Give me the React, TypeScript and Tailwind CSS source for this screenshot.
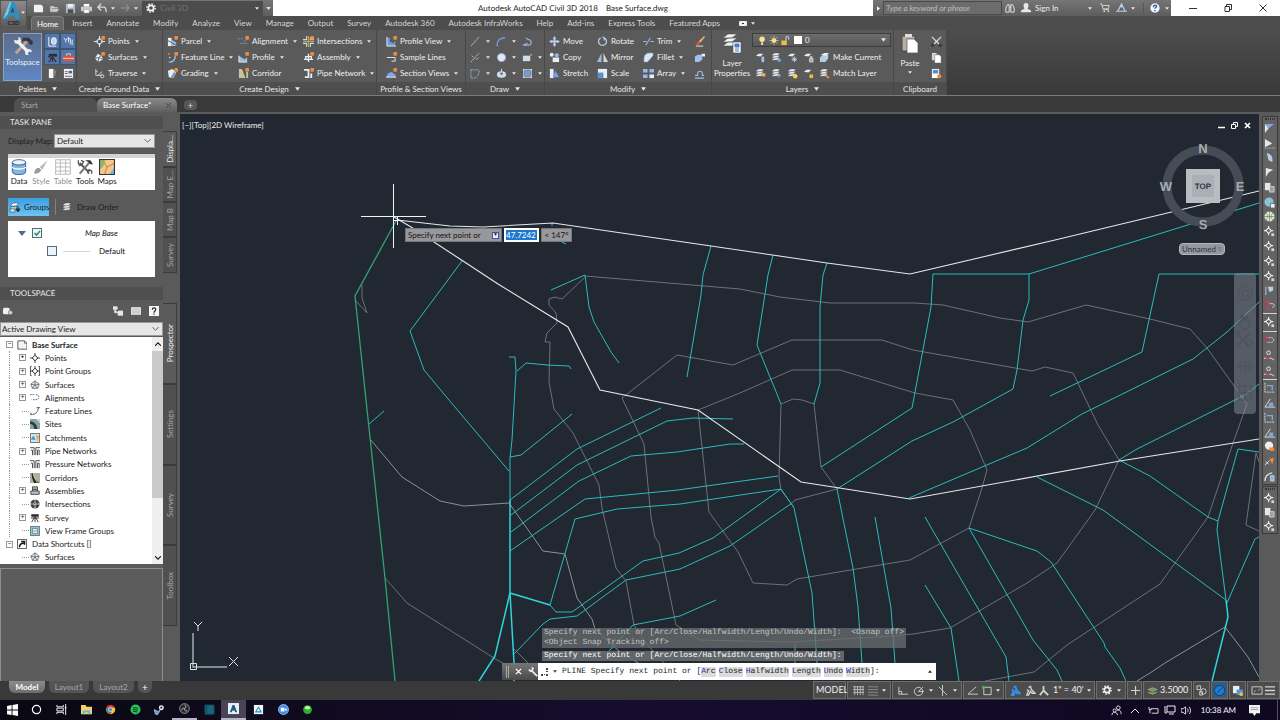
import { ReactNode, useState } from 'react';
import { clsx } from 'clsx';

// ── icons ────────────────────────────────────────────────────────────────────
const BLUE = '#9dbbe0';
const PALE = '#e8eef5';
const ORANGE = '#f08a3c';

const dot = <rect x="8" y="0" width="4" height="4" rx="1" fill={ORANGE} />;
const stack = (
  <g fill={PALE} stroke="#3a3a3a" strokeWidth=".5">
    <path d="M1 8l3-2h6l-3 3H1z" />
    <path d="M1 5.5l3-2h6l-3 3H1z" />
    <path d="M1 3l3-2h6l-3 3H1z" />
  </g>
);
const target = (c: string) => (
  <g fill="none" stroke={c} strokeWidth="1.1">
    <path d="M6 2.5L9.5 6 6 9.5 2.500 6z" />
    <path d="M6 0v4M6 8v4M0 6h4M8 6h4" />
  </g>
);

const ICONS: Record<string, ReactNode> = {
  points: <>{target('#dfe6ee')}{dot}</>,
  surfaces: <><path d="M1 7l3-5 4 2 2 4-5 3z" fill={PALE} /><path d="M1 7l4-1 3-2M5 6v5M5 6l5 2" stroke="#566" fill="none" />{dot}</>,
  traverse: <g fill="none" stroke="#d0d6dc"><path d="M2 1v7h7M4 8l5-4M2 4h2" /><circle cx="9" cy="9" r="1.8" /></g>,
  parcel: <><path d="M1 2h4v9H1z" fill={PALE} /><path d="M5 4l5 3v4H5z" fill={BLUE} /><path d="M1 5l9 5" stroke="#556" />{dot}</>,
  featureLine: <><path d="M2 11c5 0 7-3 7-7" stroke={BLUE} strokeWidth="1.5" fill="none" /><circle cx="2" cy="2" r="1" fill={ORANGE} /><circle cx="3" cy="6" r=".8" fill={PALE} />{dot}</>,
  grading: <><path d="M1 3l5-2 4 4-3 6-5-1z" fill={PALE} /><path d="M4 10l4-6 2 2-3 5z" fill="#7f97b5" />{dot}</>,
  alignment: <><path d="M0 3h5M2 8h8M6 6l4-2" stroke="#6e9bd8" strokeDasharray="2 1" fill="none" />{dot}</>,
  profile: <><path d="M1 4v7h9V6L7 8 4 6z" fill={BLUE} /><path d="M1 4v7h9" stroke={PALE} fill="none" />{dot}</>,
  corridor: <><path d="M1 1h3l4 10H1zM9 4h2v7H9z" fill="#b9c5b9" /><path d="M4 2l3 9" stroke="#e2c44c" strokeWidth="1.4" />{dot}</>,
  intersections: <><path d="M4 0v4H0M8 12V8h4M4 12V8H0M8 1v3h4" stroke="#d8dde2" strokeWidth="1.2" fill="none" /><path d="M6 0v12M0 6h12" stroke="#e0bf45" strokeWidth=".8" />{dot}</>,
  assembly: <><path d="M1 8h10M3 8V5h6v3M6 2v9" stroke={PALE} strokeWidth="1.5" fill="none" />{dot}</>,
  pipe: <><path d="M1 2h5v8H2M9 6v5" stroke={PALE} strokeWidth="2" fill="none" />{dot}</>,
  profileView: <><path d="M1 2v9h9V5L8 8 4 6V2z" fill="#6f9be0" /><path d="M1 1v10h10" stroke={PALE} fill="none" />{dot}</>,
  sampleLines: <><path d="M1 6h9v4H6" stroke={PALE} fill="none" />{dot}</>,
  sectionViews: <><path d="M0 10l2-4 4-2 4 3 1 3z" fill="#7aa7ea" /><path d="M0 10h11" stroke={PALE} />{dot}</>,
  line: <path d="M1 11L10 1" stroke={BLUE} fill="none" />,
  arc: <path d="M1 11c0-6 3-9 9-9M1 11l1-1" stroke="#7aa7ea" fill="none" strokeWidth="1.3" />,
  pline: <path d="M1 10h6a3 3 0 000-6L4 2M1 10l5-2" stroke="#9db7dd" fill="none" strokeWidth="1.2" />,
  xline: <path d="M1 11L10 1M2 4l3 3M7 8l3-2" stroke="#c7cfd8" fill="none" strokeDasharray="2 1" />,
  circle: <circle cx="6" cy="6" r="4.5" fill="#dfe8f4" stroke="#8fa9c9" />,
  rect: <><path d="M1 4h8v6H1z" fill="#cfdceb" /><path d="M9 2h2v2H9z" fill={ORANGE} /></>,
  spline: <path d="M1 2v9h3c4 0 6-4 6-8M1 2h9" stroke={BLUE} fill="none" strokeDasharray="2 1" />,
  ellipse: <><ellipse cx="6" cy="7" rx="5" ry="3.5" fill="#cfdceb" /><circle cx="6" cy="6" r="1.5" fill="#5b6d88" /><path d="M6 1v4" stroke={PALE} /></>,
  hatch: <><path d="M1 2h10M1 10h10M2 1v10M10 1v10" stroke={PALE} /><path d="M3 3h6v6H3z" fill="#6f9be0" /></>,
  move: <path d="M6 0l2 3H7v2h2V4l3 2-3 2V7H7v2h1l-2 3-2-3h1V7H3v1L0 6l3-2v1h2V3H4z" fill="#b9cdea" />,
  copy: <g fill={PALE}><circle cx="3" cy="3" r="2.2" /><circle cx="8.5" cy="3.5" r="2.2" fill={BLUE} /><path d="M4 6h7v5H4z" /></g>,
  stretch: <><path d="M1 1h4v10H1z" fill={PALE} /><path d="M4 10l3-7 4 7z" fill="#6fa3e8" /></>,
  rotate: <path d="M4 2a4.4 4.4 0 104 0M8 2l-2-1M8 2v3" stroke="#b4c9e6" strokeWidth="1.4" fill="none" />,
  mirror: <><path d="M5 1v10H0z" fill={BLUE} /><path d="M7 1v10h5z" fill="#d0d7e0" /></>,
  scale: <><path d="M1 1h10v10H1z" fill={PALE} /><path d="M1 5h6v6H1z" fill="#5f8bd0" /></>,
  trim: <path d="M0 6h4M8 6h4M3 10L8 2" stroke="#9db7dd" fill="none" strokeWidth="1.2" />,
  fillet: <path d="M1 11V7c0-4 3-6 6-6h4v3L5 11z" fill="#dce6f2" stroke="#6f8fc4" strokeWidth=".7" />,
  array: <g fill="#8fb7ef"><path d="M0 1h5v4H0zM7 1h5v4H7zM0 7h5v4H0z" /><path d="M7 7h5v4H7z" fill={PALE} /></g>,
  brush: <><path d="M5 6l6-6 1 1-5 6z" fill="#e2bb62" /><path d="M1 9l4-3 2 1-2 3z" fill="#e0532c" /><path d="M2 11h8" stroke={PALE} /></>,
  explode: <><path d="M1 5l3-2h5v5l-3 3H1z" fill="#9fc0ee" /><path d="M8 2h4v3H9z" fill={PALE} /></>,
  offset: <path d="M1 11h10M1 8h3V6a2.5 2.5 0 115 0v2h2" stroke={BLUE} fill="none" strokeWidth="1.2" />,
  layerA: <><path d="M1 4l3-2h5l-3 3z" fill={PALE} /><path d="M7 5h3v6H7z" fill="#9fc0ee" /></>,
  layerB: <>{stack}<circle cx="9" cy="9" r="2" fill="#6fa3e8" /></>,
  layerC: <><path d="M1 4l3-2h5l-3 3z" fill={PALE} /><path d="M8 5v6M5 8h6M6 6l4 4M10 6L6 10" stroke="#b9d7f8" /></>,
  layerD: <><path d="M1 4l3-2h5l-3 3z" fill={PALE} /><path d="M7 7h4v4H7zM8 7V5h2v2" fill="#aab" stroke={PALE} strokeWidth=".6" /></>,
  layerE: <><path d="M1 6l3-3h6v4l-3 4H1z" fill="#b8cbe4" /><path d="M2 3l4-2h5L8 4z" fill={PALE} /></>,
  layerF: <>{stack}<circle cx="9.5" cy="7.5" r="2" fill="#f5b04a" /></>,
  layerG: <>{stack}<path d="M8 6l3 2-3 3z" fill="#7db1f7" /></>,
  layerH: <>{stack}<circle cx="9" cy="9" r="2.4" fill="#f1d84b" /></>,
  layerI: <><path d="M1 4l3-2h5l-3 3z" fill={PALE} /><path d="M7 7h4v4H7z" fill="#e8b93c" /></>,
  layerJ: <>{stack}<path d="M7 8l4 3" stroke={ORANGE} strokeWidth="2" /></>,
  cut: <><path d="M1 1l8 8M11 1L3 9" stroke="#dfe3e8" strokeWidth="1.2" /><circle cx="2" cy="10" r="1.3" fill="none" stroke="#222" /><circle cx="10" cy="10" r="1.3" fill="none" stroke="#222" /></>,
  pages: <><path d="M1 1h5v8H1z" fill="#d5d8db" /><path d="M4 3h5l2 2v7H4z" fill="#fff" stroke="#666" strokeWidth=".5" /></>,
  pasteSpec: <><path d="M1 1h8v10H1z" fill="#fff" /><path d="M2 2h6v4H2z" fill="#5f8bd0" /><circle cx="9" cy="9" r="2.3" fill={ORANGE} /></>,
  // quick access
  newFile: <path d="M1 2h8l2 2v6H1z" fill="#f2f2f2" />,
  open: <path d="M1 3h4l1 1h4v2h2l-3 4H1zM3 6h8" fill="#c9c9c9" stroke="#555" strokeWidth=".5" />,
  save: <><path d="M1 1h10v10H1z" fill="#aeb6c0" /><path d="M3 1h6v4H3z" fill="#eee" /><path d="M3 7h6v4H3z" fill="#46505c" /></>,
  print: <><path d="M3 1h6v3H3z" fill="#fff" /><path d="M0 4h12v5H0z" fill="#c8ccd0" /><path d="M3 7h6v4H3z" fill="#fff" stroke="#777" strokeWidth=".5" /></>,
  undo: <path d="M5 1L1 5l4 4M1 5h7c3 0 3 3 3 6" stroke="#d8d8d8" strokeWidth="1.6" fill="none" />,
  redo: <path d="M7 2l4 4-4 4M11 6H1" stroke="#8a8a8a" strokeWidth="1.6" fill="none" />,
  gear: <g fill="none" stroke="#f2f2f2"><circle cx="6" cy="6" r="3.2" strokeWidth="2" /><circle cx="6" cy="6" r="5" strokeWidth="1.6" strokeDasharray="2 1.9" /></g>,
  binoculars: <path d="M1 11V6l2-4h2v9zM7 11V2h2l2 4v5zM5 5h2" fill="none" stroke="#e2e2e2" strokeWidth="1.2" />,
  user: <path d="M6 0a3 3 0 013 3c0 2-1 3-1 4l4 2v2H0V9l4-2c0-1-1-2-1-4a3 3 0 013-3z" fill="#e4e6e9" />,
  cart: <><path d="M0 1h2l2 7h7M3 3h8l-1 4H4" stroke="#e2e2e2" fill="none" /><circle cx="5" cy="10" r="1" fill="#eee" /><circle cx="10" cy="10" r="1" fill="#eee" /></>,
  exchange: <path d="M6 1L2 9h8zM0 9h12M6 1v4" stroke="#b7d2f0" strokeWidth="1.3" fill="none" />,
  help: <><circle cx="6" cy="6" r="5.6" fill="#f2f5fa" /><path d="M4 5c0-3 4-3 4-1 0 1-2 1-2 3M6 8.300v1.500" stroke="#2257a5" strokeWidth="1.500" fill="none" /></>,
  // palette toggles
  palA: <><path d="M2 1v10h8" stroke="#fff" fill="none" /><rect x="5" y="2" width="5" height="7" rx="2" fill="#bcd5f5" stroke="#fff" /></>,
  palB: <path d="M1 2l2 3 2-3M3 5v2M6 1v6M6 3h2v6M10 4v6" stroke="#e8f0fa" fill="none" />,
  palC: <><path d="M2 2h9v3H2z" fill="#29303a" /><path d="M6 5l-4 6M6 5l4 6M6 5v6M1 5l3 1" stroke="#29303a" fill="none" strokeWidth="1.2" /></>,
  palD: <><rect x="0" y="4" width="12" height="6" rx="1" fill="#d9553d" /><path d="M4 4V2h4v2M0 7h12" stroke="#f4d1c6" fill="none" /></>,
  palE: <><path d="M2 1h5v10H2z" fill="#f4f4f4" /><path d="M8 1l2 3-2 7z" fill="#8a8a8a" /></>,
  palF: <><path d="M1 1h10v10H1z" fill="#f2f2f2" /><path d="M6 3h4v3H6z" fill="#3f6fb5" /><path d="M2 4h3M2 6h3M2 9h8" stroke="#555" /></>,
  // task pane
  data: <><path d="M1 2.500v7c0 3 10 3 10 0v-7z" fill="#86b4dc" stroke="#2c5e93" strokeWidth=".7" /><ellipse cx="6" cy="2.500" rx="5" ry="2" fill="#eaf4fc" stroke="#2c5e93" strokeWidth=".7" /><path d="M1 6c1 2 9 2 10 0" fill="none" stroke="#fff" /></>,
  style: <><path d="M5 6l6-5-4 7z" fill="#bbb" /><path d="M1 11c0-3 2-5 4-4l1 1c0 2-3 3-5 3z" fill="#999" /></>,
  table: <g fill="none" stroke="#bdbdbd" strokeWidth=".8"><path d="M.500.500h11v11H.500z" /><path d="M.500 3h11M.500 6h11M.500 9h11M4 1v10M8 1v10" /></g>,
  tools: <><path d="M2 3l7 7" stroke="#555" strokeWidth="1.500" /><path d="M1 1v2l1 2 2-1 1-2-2-1M11 11V9L9 8 8 10l1 1" stroke="#555" fill="none" /><path d="M9 3l-7 8" stroke="#777" strokeWidth="1.500" /><path d="M6 1h4l2 3-2 0-2-2z" fill="#333" /></>,
  maps: <><path d="M0 0h12v12H0z" fill="#f3c98a" /><path d="M0 0h5L3 6 0 8z" fill="#7fbd6a" /><path d="M7 12l5-6v6z" fill="#6fb4dd" /><path d="M2 0l4 6-2 6M6 6l6-3" stroke="#d98a58" fill="none" /><path d="M.400.400h11.200v11.200H.400z" stroke="#333" strokeWidth=".800" fill="none" /></>,
  groups: <><path d="M1 5l3-3h6L7 5zM1 8l1-2h6L7 8z" fill="#fff" stroke="#345" strokeWidth=".6" /><path d="M9 5v5M7 8l2 3 2-3z" fill="#1d3245" stroke="#1d3245" /><path d="M1 8h5v3H1z" fill="#dce9f5" stroke="#345" strokeWidth=".6" /></>,
  order: stack,
  globe: <><rect x="0" y="2" width="8" height="8" rx="2" fill="#f1f1f1" /><circle cx="9" cy="8" r="2.600" fill="#c9d3dc" stroke="#555" strokeWidth=".7" /></>,
  treeToggle: <path d="M0 1h5v3H0zM2 4v4h4M6 6h6v5H6z" fill="#e6e6e6" stroke="#e6e6e6" />,
  preview: <path d="M0 2h12v8H0z" fill="#cfcfcf" stroke="#efefef" />,
  helpBox: <><path d="M0 0h12v12H0z" fill="#f6f6f6" /><path d="M4 4.500C4 1 8.500 2 8 4.500 8 6 6 6 6 8M6 9v1.500" stroke="#222" strokeWidth="1.400" fill="none" /></>,
  // prospector tree
  tDrawing: <><path d="M1 1h8l3 3v7H1z" fill="#f4f4f4" stroke="#444" /><path d="M9 1v3h3" fill="none" stroke="#444" strokeWidth=".7" /></>,
  tPoints: target('#333'),
  tPointGroups: <>{target('#333')}<path d="M2 .500H.500v11H2M10 .500h1.500v11H10" stroke="#333" fill="none" /></>,
  tSurfaces: <path d="M1 5l5-4 5 4-2 5H3zM1 5l5 1 5-1M6 1v5l-3 4M6 6l3 4" fill="#e9ecef" stroke="#444" strokeWidth=".8" />,
  tAlignments: <path d="M0 2h5M7 2c5 0 5 6 0 6H2" fill="none" stroke="#555" strokeDasharray="2 1" />,
  tFeature: <><path d="M1 10c5 1 9-3 9-8" fill="none" stroke="#444" /><path d="M8 2h4M1 8v3" stroke="#444" /></>,
  tSites: <><path d="M0 0h12v12H0z" fill="#88a2a8" /><path d="M0 3c5 0 8 3 9 9H5C5 8 3 6 0 6z" fill="#2e3b36" /><path d="M7 0h5v5z" fill="#b9dcef" /></>,
  tCatch: <><path d="M.500.500h11v11H.500z" fill="#cfe6ef" stroke="#555" /><path d="M1 8l3-5 3 5z" fill="#4e94c9" /><path d="M7 2l4 2-2 7z" fill="#f1a65c" /></>,
  tPipe: <path d="M0 2h5v9M3 5v6M1 5h2M7 11V2h5M9 11V5h2v6" fill="none" stroke="#333" />,
  tCorridor: <><path d="M0 0h12v12H0z" fill="#a9b0a6" /><path d="M3 0c1 5 3 8 8 12H5C3 8 2 5 2 0z" fill="#222" /><path d="M4 1c1 5 3 8 5 11" stroke="#e6cf4a" fill="none" /></>,
  tAssembly: <path d="M3 4V1h6v3M1 10V6h10v4zM3 6V4h6v2" fill="#b9bfc6" stroke="#333" />,
  tInter: <><circle cx="6" cy="6" r="5.500" fill="#444" /><path d="M6 0v12M0 6h12" stroke="#fff" strokeWidth="1.200" strokeDasharray="2 1" /></>,
  tSurvey: <path d="M2 2h8v2H2zM6 4L2 11M6 4l4 7M6 4v7M1 6h10" fill="#333" stroke="#333" strokeWidth="1.100" />,
  tView: <><path d="M.500.500h11v11H.500z" fill="#9ec3cd" stroke="#46666e" /><path d="M3 3h6v6H3zM4 6h4" fill="#e1eff2" stroke="#46666e" strokeWidth=".7" /></>,
  tShortcut: <><path d="M.500.500h11v11H.500z" fill="#fff" stroke="#333" /><path d="M3 10c0-4 2-5 5-5M5 3h4v4" stroke="#111" strokeWidth="1.800" fill="none" /></>,
  // right toolbar
  rA: <><path d="M1 1h10L5 6z" fill="#7fa8dc" /><path d="M1 1v10l4-5z" fill="#dfe6ee" /></>,
  rB: <><path d="M1 1l8 5-8 4z" fill="#dfe6ee" /><path d="M1 11h11" stroke="#cfd6de" strokeDasharray="1 1" /></>,
  rC: <path d="M3 1c5 1 7 5 6 10L5 9z" fill="#b8cde8" />,
  rD: <path d="M2 11V1l8 2-5 3z" fill="#e2e7ee" />,
  rE: <><path d="M1 1h6v8H1z" fill="#e4e7ea" /><path d="M6 5h5v6H6z" fill="#9a9fa6" stroke="#eee" strokeWidth=".7" /></>,
  rF: <><circle cx="5.500" cy="5.500" r="5" fill="#8cc3d2" /><path d="M7 7h5v5H7z" fill="#e6eef2" stroke="#445" strokeWidth=".7" /></>,
  rG: <><circle cx="6" cy="6" r="5.500" fill="#e3ead0" /><path d="M6 0v12M0 6h12M2 2c3 3 3 5 0 8M10 2c-3 3-3 5 0 8" stroke="#6a8466" strokeWidth=".8" fill="none" /></>,
  rH: <><path d="M5 2l3 3-3 3-3-3zM5 0v2M5 8v2M0 5h2M8 5h2" stroke="#f0f0f0" fill="none" strokeWidth="1.200" /><path d="M8 8h3v3H8z" fill="#cfd6de" /></>,
  rI: <><path d="M2 11V2" stroke="#b8cde8" /><path d="M4 2h6v4L6 8z" fill="#b8cde8" /></>,
  rJ: <><path d="M4 1v10M1 2l6 0" stroke="#e0384f" strokeWidth="1.500" /><path d="M6 4h3c3 0 3 4 0 4" stroke="#c9d6e6" fill="none" /></>,
  rK: <><circle cx="3" cy="4" r="1.800" fill="#e0384f" /><path d="M5 4h3c4 0 3 5 0 5H3" stroke="#d6dde6" strokeDasharray="2 1" fill="none" /></>,
  rL: <><circle cx="5" cy="3" r="2" fill="none" stroke="#eee" /><circle cx="4" cy="9" r="1.600" fill="#e0384f" /><path d="M0 9h2M6 9h2l3 2" stroke="#eee" fill="none" /></>,
  rM: <><path d="M1 1v10h11" stroke="#dfe6ee" fill="none" strokeDasharray="2 1" /><path d="M3 4h6v5" stroke="#7fa8dc" fill="none" strokeWidth="1.500" /></>,
  rN: <><path d="M1 11h11M1 11l6-9" stroke="#dfe6ee" fill="none" /><path d="M6 6h4v4H5z" fill="#7fa8dc" /></>,
  rO: <><circle cx="5.500" cy="5" r="4.500" fill="#f0f0f0" /><path d="M5 7h6v4H7z" fill={ORANGE} /></>,
  rP: <><path d="M1 10l5-5M2 6l3 3" stroke="#dfe6ee" /><path d="M6 3l5-1-2 7z" fill={ORANGE} /></>,
  rQ: <><path d="M1 11c0-6 3-8 8-9" stroke="#dfe6ee" strokeWidth="1.300" fill="none" /><path d="M7 5h4v6H7z" fill="#8fb2e6" stroke="#eee" strokeWidth=".6" /></>,
};

function Ico({ n, className = 'size-3' }: { n: string; className?: string }) {
  return (
    <svg viewBox="0 0 12 12" className={clsx('shrink-0', className)} fill="none" aria-hidden="true">
      {ICONS[n]}
    </svg>
  );
}

function Caret({ className = '' }: { className?: string }) {
  return (
    <svg viewBox="0 0 6 4" className={clsx('w-1 h-[3px] shrink-0 fill-[#e6e6e6]', className)} aria-hidden="true">
      <path d="M0 0h6L3 4z" />
    </svg>
  );
}

function Chevron() {
  return (
    <svg viewBox="0 0 8 5" className="pointer-events-none absolute right-1 top-[5px] h-1 w-[7px]" fill="none" stroke="#444" aria-hidden="true">
      <path d="M0 0l4 4 4-4" />
    </svg>
  );
}

// ── title bar ────────────────────────────────────────────────────────────────
function QuickAccess() {
  return (
    <div className="flex h-4 w-[246px] shrink-0 items-center bg-linear-to-b from-[#757575] to-[#5d5d5d] pl-1.5">
      <div className="flex items-center gap-[5px]">
        {['newFile', 'open', 'save', 'print'].map((n) => (
          <button key={n} aria-label={n}><Ico n={n} className="size-[11px]" /></button>
        ))}
        <button aria-label="Undo" className="flex items-center gap-1"><Ico n="undo" className="size-[10px]" /><Caret /></button>
        <button aria-label="Redo" className="flex items-center gap-1"><Ico n="redo" className="size-[10px]" /><Caret /></button>
      </div>
      <button className="ml-1 flex h-[15px] flex-1 items-center gap-1 bg-[#4c4c4c] px-1 text-[#737373]">
        <Ico n="gear" className="size-[10px]" />
        <span>Civil 3D</span>
        <Caret className="ml-auto" />
      </button>
      <button aria-label="Customize" className="flex w-[10px] justify-center"><Caret className="w-[5px] h-1" /></button>
    </div>
  );
}

function InfoCenter() {
  return (
    <div className="flex h-4 w-[298px] shrink-0 items-center bg-linear-to-b from-[#757575] to-[#5d5d5d]">
      <button aria-label="Collapse search" className="flex w-[10px] justify-center">
        <svg viewBox="0 0 4 6" className="h-[5px] w-[3px] fill-white"><path d="M0 0l4 3-4 3z" /></svg>
      </button>
      <input
        aria-label="Search"
        placeholder="Type a keyword or phrase"
        className="h-[14px] w-[119px] border border-[#4a4a4a] bg-[#6c6c6c] px-0.5 italic text-white outline-none placeholder:text-[#bdbdbd]"
      />
      <button aria-label="Find" className="ml-[3px]"><Ico n="binoculars" className="size-[10px]" /></button>
      <button className="ml-[6px] flex items-center gap-[4px] text-[#ededed]">
        <Ico n="user" className="size-[10px]" />Sign In
      </button>
      <Caret className="ml-auto mr-2" />
      <button aria-label="App store"><Ico n="cart" className="size-[10px]" /></button>
      <button aria-label="Stay connected" className="ml-1.5 flex items-center gap-1"><Ico n="exchange" className="size-[11px]" /><Caret /></button>
      <button aria-label="Help" className="ml-2 mr-0.5 flex items-center gap-[5px] border-l border-[#555] pl-1.5"><Ico n="help" className="size-[10px]" /><Caret /></button>
    </div>
  );
}

const TABS = [
  'Home', 'Insert', 'Annotate', 'Modify', 'Analyze', 'View', 'Manage', 'Output', 'Survey',
  'Autodesk 360', 'Autodesk InfraWorks', 'Help', 'Add-ins', 'Express Tools', 'Featured Apps',
];

function TopBars() {
  return (
    <header className="flex shrink-0">
      <button aria-label="Application menu" className="flex h-[28px] w-[27px] shrink-0 flex-col items-center border border-[#555] bg-linear-to-b from-[#8b8b8b] to-[#5b5b5b]">
        <svg viewBox="0 0 24 20" className="h-[19px] w-[23px]" aria-hidden="true">
          <path d="M1 19L8 1h5l6 18h-5l-1-4H8l-2 4z" fill="#2d8fc4" />
          <path d="M8 1h2L6 14l-5 5z" fill="#7cc6ea" />
          <path d="M9 12l2-6 2 6z" fill="#4a4a4a" />
          <path d="M20 11h4l-2 2.500z" fill="#eee" />
        </svg>
        <span className="text-[6px] font-bold leading-none text-[#222]">C3D</span>
      </button>
      <div className="min-w-0 flex-1">
        <div className="flex h-4 items-center bg-white">
          <QuickAccess />
          <h1 className="min-w-0 flex-1 truncate whitespace-pre text-center text-[#222]">Autodesk AutoCAD Civil 3D 2018    Base Surface.dwg</h1>
          <InfoCenter />
          <div className="flex w-[109px] shrink-0 items-center justify-around pl-1">
            <button aria-label="Minimize"><svg viewBox="0 0 8 8" className="size-2" stroke="#333"><path d="M0 4.500h8" /></svg></button>
            <button aria-label="Restore"><svg viewBox="0 0 8 8" className="size-2" stroke="#333" fill="none"><path d="M1 2.500h4.500v5H1zM2.500 2V.500h5v5H6" /></svg></button>
            <button aria-label="Close"><svg viewBox="0 0 8 8" className="size-2" stroke="#333"><path d="M.500.500l7 7M7.500.500l-7 7" /></svg></button>
          </div>
        </div>
        <nav className="flex h-[14px] items-stretch bg-[#4d4d4d] pl-1 text-[#d6d6d6]">
          {TABS.map((t, i) => (
            <button key={t} className={clsx('whitespace-nowrap', i === 0 ? 'mr-px rounded-t-sm border border-b-0 border-[#7c7c7c] bg-[#666] px-[5px] text-white' : 'px-[7px]')}>
              {t}
            </button>
          ))}
          <button aria-label="Minimize ribbon" className="ml-3 flex items-center gap-1">
            <span className="flex h-[5px] w-2 items-center justify-center rounded-[1px] bg-[#eee]"><span className="h-px w-0.5 bg-[#333]" /></span>
            <Caret />
          </button>
        </nav>
      </div>
    </header>
  );
}

// ── ribbon ───────────────────────────────────────────────────────────────────
function Panel({ title, arrow = true, className, children }: { title: string; arrow?: boolean; className: string; children: ReactNode }) {
  return (
    <section className={clsx('flex shrink-0 flex-col border-r border-[#484848] bg-[#5a5a5a]', className)}>
      <div className="h-[52px] pt-[3px]">{children}</div>
      <h2 className="flex h-[13px] items-center justify-center gap-1.5 whitespace-nowrap bg-[#4e4e4e] text-[#e6e6e6]">
        {title}
        {arrow && <Caret className="w-[5px] h-[4px]" />}
      </h2>
    </section>
  );
}

type Cmd = [icon: string, label: string, arrow?: boolean];

function Column({ cmds, className }: { cmds: Cmd[]; className?: string }) {
  return (
    <div className={clsx('flex flex-col', className)}>
      {cmds.map(([icon, label, arrow]) => (
        <button key={icon} aria-label={label || icon} className="flex h-4 items-center gap-[3px] whitespace-nowrap">
          <Ico n={icon} className="size-[11px]" />
          {label}
          {arrow && <Caret className="ml-0.5" />}
        </button>
      ))}
    </div>
  );
}

const LAYER_ROWS = [
  { icons: ['layerA', 'layerB', 'layerC', 'layerD'], last: 'layerE', label: 'Make Current' },
  { icons: ['layerF', 'layerG', 'layerH', 'layerI'], last: 'layerJ', label: 'Match Layer' },
];

function Ribbon() {
  return (
    <div className="flex h-[66px] shrink-0 overflow-hidden border-b border-[#7a7a7a] bg-linear-to-b from-[#4d4d4d] to-[#393939] text-[#f0f0f0]">
      <Panel title="Palettes" className="w-[77px]">
        <div className="flex gap-0.5 pl-[3px]">
          <button className="flex h-12 w-[39px] flex-col items-center border border-[#86a3cc] bg-linear-to-b from-[#5b6d8a] to-[#5f86c4] pt-0.5">
            <svg viewBox="0 0 24 22" className="h-[20px] w-[22px]" fill="none" aria-hidden="true">
              <path d="M16 6L4 19" stroke="#caa48c" strokeWidth="3" />
              <path d="M12 2h6l5 4-1 4-3-1-1-3-3-1-4 1z" fill="#33373e" />
              <path d="M6 6l12 12" stroke="#f2f2f2" strokeWidth="3.500" />
              <path d="M2 4l1 4 4 1 3-3-1-4-2-1v3L5 5zM22 18l-1-3-4-1-3 3 1 4 3 0-1-3 2-1z" fill="#ececec" />
            </svg>
            <span>Toolspace</span>
          </button>
          <div className="grid grid-cols-2">
            {['palA', 'palB', 'palC', 'palD', 'palE', 'palF'].map((n, i) => (
              <button key={n} aria-label={n} className={clsx('flex size-4 items-center justify-center', i < 4 && 'border border-[#3c5478] bg-[#5475a8]')}>
                <Ico n={n} className="size-[11px]" />
              </button>
            ))}
          </div>
        </div>
      </Panel>
      <Panel title="Create Ground Data" className="w-[86px]">
        <Column className="pl-[17px]" cmds={[['points', 'Points', true], ['surfaces', 'Surfaces', true], ['traverse', 'Traverse', true]]} />
      </Panel>
      <Panel title="Create Design" className="w-[214px]">
        <div className="grid grid-cols-[71px_65px_1fr] pl-[4px]">
          <Column cmds={[['parcel', 'Parcel', true], ['featureLine', 'Feature Line', true], ['grading', 'Grading', true]]} />
          <Column cmds={[['alignment', 'Alignment', true], ['profile', 'Profile', true], ['corridor', 'Corridor']]} />
          <Column cmds={[['intersections', 'Intersections', true], ['assembly', 'Assembly', true], ['pipe', 'Pipe Network', true]]} />
        </div>
      </Panel>
      <Panel title="Profile & Section Views" arrow={false} className="w-[89px]">
        <Column className="pl-[9px]" cmds={[['profileView', 'Profile View', true], ['sampleLines', 'Sample Lines'], ['sectionViews', 'Section Views', true]]} />
      </Panel>
      <Panel title="Draw" className="w-[79px]">
        <div className="grid grid-cols-[26px_26px_1fr] pl-[4px]">
          <Column cmds={[['line', '', true], ['xline', '', true], ['spline', '', true]]} />
          <Column cmds={[['arc', '', true], ['circle', '', true], ['ellipse', '', true]]} />
          <Column cmds={[['pline', ''], ['rect', '', true], ['hatch', '', true]]} />
        </div>
      </Panel>
      <Panel title="Modify" className="w-[167px]">
        <div className="grid grid-cols-[48px_46px_44px_1fr] pl-[4px]">
          <Column cmds={[['move', 'Move'], ['copy', 'Copy'], ['stretch', 'Stretch']]} />
          <Column cmds={[['rotate', 'Rotate'], ['mirror', 'Mirror'], ['scale', 'Scale']]} />
          <Column cmds={[['trim', 'Trim', true], ['fillet', 'Fillet', true], ['array', 'Array', true]]} />
          <Column className="pl-[7px]" cmds={[['brush', ''], ['explode', ''], ['offset', '']]} />
        </div>
      </Panel>
      <Panel title="Layers" className="w-[182px]">
        <div className="flex">
          <button className="flex w-10 flex-col items-center text-center leading-[10px]">
            <svg viewBox="0 0 20 22" className="h-[22px] w-5" aria-hidden="true">
              <g fill="#f2f2f2" stroke="#555" strokeWidth=".6">
                <path d="M1 13l5-4h9l-5 4zM1 9l5-4h9l-5 4zM1 5l5-4h9l-5 4z" />
                <path d="M11 9h8v11h-8z" fill="#f7fafd" stroke="#456" />
              </g>
              <path d="M13 11h4v3h-4zM13 16h4M13 18h4" stroke="#4f7fc0" fill="#4f7fc0" />
            </svg>
            <span className="mt-[3px]">Layer<br />Properties</span>
          </button>
          <div className="flex-1 pr-[2px]">
            <button aria-label="Layer" className="flex h-[14px] w-full items-center gap-[3px] border border-[#3c3c3c] bg-linear-to-b from-[#6d6d6d] to-[#585858] px-1">
              <svg viewBox="0 0 34 12" className="h-[11px] w-[34px]" aria-hidden="true">
                <circle cx="4" cy="4.500" r="3" fill="#f7e38c" /><path d="M3 8h2v3H3z" fill="#ddd" />
                <circle cx="17" cy="6" r="2.500" fill="#f7e38c" /><path d="M17 1v10M12 6h10M13.500 2.500l7 7M20.500 2.500l-7 7" stroke="#f7e38c" strokeWidth=".7" />
                <path d="M25 6h6v5h-6z" fill="#e8bd4c" /><path d="M30 6V3a1.500 1.500 0 013 0v2" stroke="#e6e6e6" fill="none" />
              </svg>
              <span className="size-2 bg-white" />
              0
              <Caret className="ml-auto w-[5px] h-[4px]" />
            </button>
            <div className="flex flex-col pl-[3px] pt-0.5">
              {LAYER_ROWS.map((row) => (
                <div key={row.label} className="flex h-4 items-center gap-[5px]">
                  {row.icons.map((n) => (
                    <button key={n} aria-label={n}><Ico n={n} className="size-[11px]" /></button>
                  ))}
                  <button className="flex items-center gap-[3px] whitespace-nowrap"><Ico n={row.last} className="size-[11px]" />{row.label}</button>
                </div>
              ))}
            </div>
          </div>
        </div>
      </Panel>
      <Panel title="Clipboard" arrow={false} className="w-[53px]">
        <div className="flex justify-between pl-[6px] pr-[4px]">
          <button className="flex flex-col items-center">
            <svg viewBox="0 0 20 22" className="h-[22px] w-5" aria-hidden="true">
              <path d="M2 3h13v15H2z" fill="#b6b0a6" stroke="#4a4a4a" />
              <path d="M5 1h7v3H5z" fill="#ddd" />
              <path d="M7 6h7l4 4v10H7z" fill="#fff" stroke="#555" strokeWidth=".7" />
            </svg>
            <span className="mt-0.5">Paste</span>
            <Caret className="mt-0.5" />
          </button>
          <Column cmds={[['cut', ''], ['pages', ''], ['pasteSpec', '']]} />
        </div>
      </Panel>
    </div>
  );
}

function FileTabs() {
  return (
    <div className="flex h-4 shrink-0 items-end bg-[#393939] pl-[14px]">
      <button className="h-[14px] w-[83px] rounded-t-md bg-[#505050] pl-[7px] text-left text-[#aaa]">Start</button>
      <button className="flex h-[14px] w-[80px] items-center justify-between rounded-t-md bg-linear-to-b from-[#8a8a8a] to-[#5f5f5f] px-[6px] text-white">
        Base Surface*
        <svg viewBox="0 0 6 6" className="size-[5px]" stroke="#3d3d3d" aria-hidden="true"><path d="M0 0l6 6M6 0L0 6" /></svg>
      </button>
      <button aria-label="New tab" className="mb-0.5 ml-[7px] flex h-[10px] w-[13px] items-center justify-center rounded-sm bg-[#565656] text-[10px] leading-none text-[#ddd]">+</button>
    </div>
  );
}

// ── palettes ─────────────────────────────────────────────────────────────────
function SideTabs({ tabs, className }: { tabs: [string, string][]; className?: string }) {
  return (
    <div className={clsx('flex w-[14px] shrink-0 flex-col', className)}>
      {tabs.map(([label, size], i) => (
        <button
          key={label}
          className={clsx('flex items-center justify-center border border-l-0 border-[#3b3b3b]', size, i === 0 ? 'bg-[#5b5b5b] text-[#ececec]' : 'bg-[#505050] text-[#a5a5a5]')}
        >
          <span className="rotate-180 whitespace-nowrap [writing-mode:vertical-rl]">{label}</span>
        </button>
      ))}
    </div>
  );
}

const MAP_TOOLS = [
  { n: 'data', label: 'Data', off: false },
  { n: 'style', label: 'Style', off: true },
  { n: 'table', label: 'Table', off: true },
  { n: 'tools', label: 'Tools', off: false },
  { n: 'maps', label: 'Maps', off: false },
];

function Check({ id, checked, onChange }: { id: string; checked: boolean; onChange: () => void }) {
  return (
    <span className="relative flex size-[10px]">
      <input id={id} type="checkbox" checked={checked} onChange={onChange} className="size-[10px] appearance-none border border-[#4d6b85] bg-[#eef3f7]" />
      {checked && (
        <svg viewBox="0 0 10 10" className="pointer-events-none absolute inset-0" fill="none" stroke="#2b9a3c" strokeWidth="1.600" aria-hidden="true">
          <path d="M2.500 5l2 2 3.500-4" />
        </svg>
      )}
    </span>
  );
}

function TaskPane() {
  const [base, setBase] = useState(true);
  const [def, setDef] = useState(false);
  return (
    <section className="flex h-[175px] shrink-0">
      <div className="min-w-0 flex-1 pt-1">
        <h2 className="h-[13px] bg-[#4f4f4f] pl-[10px] leading-[13px] text-[#ececec]">TASK PANE</h2>
        <div className="px-2 pt-[5px]">
          <div className="flex items-center justify-between text-[#1d1d1d]">
            <label htmlFor="display-map" className="whitespace-nowrap">Display Map:</label>
            <div className="relative w-[101px]">
              <select id="display-map" className="block h-[14px] w-full appearance-none border border-[#999] bg-[#e6e6e6] pl-0.5 leading-none">
                <option>Default</option>
              </select>
              <Chevron />
            </div>
          </div>
          <div className="mt-[6px] flex h-9 gap-0.5 border-t-4 border-[#d2d2d2] bg-white pl-px pt-px">
            {MAP_TOOLS.map(({ n, label, off }) => (
              <button key={n} disabled={off} className={clsx('flex w-5 flex-col items-center', off ? 'text-[#8d8d8d]' : 'text-[#222]')}>
                <Ico n={n} className="size-4" />
                <span className="leading-3">{label}</span>
              </button>
            ))}
          </div>
          <div className="mt-2 flex h-[18px] items-center text-[#1a1a1a]">
            <button className="flex h-full w-[41px] items-center gap-[3px] bg-linear-to-b from-[#3aa0e0] to-[#6cc3f4] px-px">
              <Ico n="groups" className="size-3" />Groups
            </button>
            <span className="ml-1.5 mr-1.5 h-4 w-px bg-[#808080]" />
            <button className="flex items-center gap-1"><Ico n="order" className="size-[11px]" />Draw Order</button>
          </div>
          <div className="mt-[5px] h-[56px] bg-white pl-2.5 pt-[7px] text-[#111]">
            <div className="flex h-[10px] items-center gap-1.5">
              <svg viewBox="0 0 8 5" className="h-[5px] w-2" aria-hidden="true"><path d="M0 0h8L4 5z" fill="#4f6a92" /></svg>
              <Check id="map-base" checked={base} onChange={() => setBase(!base)} />
              <label htmlFor="map-base" className="flex-1 pl-[37px] italic">Map Base</label>
            </div>
            <div className="mt-2 flex h-[10px] items-center pl-[29px]">
              <Check id="default-layer" checked={def} onChange={() => setDef(!def)} />
              <span className="ml-1.5 h-px w-[27px] bg-[#d5d5d5]" />
              <label htmlFor="default-layer" className="pl-[9px]">Default</label>
            </div>
          </div>
        </div>
      </div>
      <SideTabs className="pt-[19px]" tabs={[['Displa…', 'h-9'], ['Map E…', 'h-[35px]'], ['Map B', 'h-[35px]'], ['Survey', 'h-9']]} />
    </section>
  );
}

interface TreeNode {
  icon: string;
  label: string;
  box?: string;
  root?: boolean;
}

const TREE: TreeNode[] = [
  { icon: 'tDrawing', label: 'Base Surface', box: '−', root: true },
  { icon: 'tPoints', label: 'Points', box: '▪' },
  { icon: 'tPointGroups', label: 'Point Groups', box: '+' },
  { icon: 'tSurfaces', label: 'Surfaces', box: '+' },
  { icon: 'tAlignments', label: 'Alignments', box: '+' },
  { icon: 'tFeature', label: 'Feature Lines' },
  { icon: 'tSites', label: 'Sites' },
  { icon: 'tCatch', label: 'Catchments' },
  { icon: 'tPipe', label: 'Pipe Networks', box: '+' },
  { icon: 'tPipe', label: 'Pressure Networks' },
  { icon: 'tCorridor', label: 'Corridors' },
  { icon: 'tAssembly', label: 'Assemblies', box: '+' },
  { icon: 'tInter', label: 'Intersections' },
  { icon: 'tSurvey', label: 'Survey', box: '+' },
  { icon: 'tView', label: 'View Frame Groups' },
  { icon: 'tShortcut', label: 'Data Shortcuts []', box: '−', root: true },
  { icon: 'tSurfaces', label: 'Surfaces' },
];

function Toolspace() {
  return (
    <section className="flex min-h-0 flex-1">
      <div className="flex min-w-0 flex-1 flex-col">
        <h2 className="h-[13px] shrink-0 bg-[#4f4f4f] pl-[10px] leading-[13px] text-[#ececec]">TOOLSPACE</h2>
        <div className="flex h-[22px] shrink-0 items-center gap-2 pl-[3px] pr-1">
          <button aria-label="Active view" className="mr-auto"><Ico n="globe" className="size-[10px]" /></button>
          <button aria-label="Toggle tree"><Ico n="treeToggle" className="size-[10px]" /></button>
          <button aria-label="Toggle preview"><Ico n="preview" className="size-[10px]" /></button>
          <button aria-label="Toolspace help"><Ico n="helpBox" className="size-[10px]" /></button>
        </div>
        <div className="relative shrink-0">
          <select aria-label="Drawing view" className="block h-[14px] w-full appearance-none border border-[#999] bg-[#e6e6e6] pl-px leading-none text-[#1d1d1d]">
            <option>Active Drawing View</option>
          </select>
          <Chevron />
        </div>
        <div className="mt-px box-content flex h-[227px] shrink-0 border-b-4 border-[#5b5b5b] bg-white">
          <ul className="flex min-w-0 flex-1 flex-col pt-px text-[#1a1a1a]">
            {TREE.map((t, i) => (
              <li key={i} className="flex flex-1 items-center">
                <span className={clsx('flex h-full w-[19px] shrink-0 items-center justify-center', t.root && 'hidden')}>
                  {i < 15 && <span className="h-full w-px border-l border-dotted border-[#999]" />}
                </span>
                <span className={clsx('flex shrink-0 items-center', t.root ? 'w-[17px] pl-[6px]' : 'w-[11px]')}>
                  {t.box ? (
                    <span className="flex size-[7px] items-center justify-center border border-[#999] text-[7px] leading-none">{t.box}</span>
                  ) : (
                    <span className="ml-[3px] w-[7px] border-t border-dotted border-[#999]" />
                  )}
                </span>
                <button className={clsx('flex items-center gap-[5px] whitespace-nowrap', i === 0 && 'font-bold')}>
                  <Ico n={t.icon} className="size-[10px]" />
                  {t.label}
                </button>
              </li>
            ))}
          </ul>
          <div className="flex w-[11px] shrink-0 flex-col items-center bg-[#efefef]">
            <svg viewBox="0 0 8 5" className="my-[5px] h-1 w-[6px]" fill="none" stroke="#222" strokeWidth="1.500"><path d="M0 5l4-4 4 4" /></svg>
            <span className="h-[147px] w-full bg-[#c9c9c9]" />
            <svg viewBox="0 0 8 5" className="mb-1 mt-auto h-1 w-[6px]" fill="none" stroke="#222" strokeWidth="1.500"><path d="M0 0l4 4 4-4" /></svg>
          </div>
        </div>
        <div className="min-h-0 flex-1 border border-b-0 border-[#8e8e8e] bg-[#5c5c5c]" />
      </div>
      <SideTabs className="pt-4" tabs={[['Prospector', 'h-[81px]'], ['Settings', 'h-[81px]'], ['Survey', 'h-[80px]'], ['Toolbox', 'h-[81px]']]} />
    </section>
  );
}

// ── drawing ──────────────────────────────────────────────────────────────────
// model space geometry, one "x,y ..." list per polyline
const CONTOURS = [
  '362,285 362,298 367,313 355,300',
  '585,277 562,299 555,297 549,299 549,305 556,313 557,323 547,333 545,342 550,342 549,382 554,409 573,433 599,485 602,508 616,568 626,581 634,625 645,642 680,681',
  '585,276 740,289 780,297 830,303 915,303 943,305 1000,318 1028,322 1086,305 1150,319 1190,329 1207,348 1247,404 1233,443 1208,517 1160,584 1067,645 1034,672 985,681',
  '893,636 913,634 950,628 1027,583 1057,563 1095,510 1119,460 1098,425 1073,373 1045,367 1032,371 913,350 882,340 792,340 733,365 677,355 622,398 644,444 651,517 655,537 659,543 676,625 700,640 790,642 893,636',
  '698,410 740,393 792,370 840,370 915,393 953,400 970,430 987,470 982,488 969,528 910,560 797,579 787,585 753,583 738,552 709,512 698,410',
  '781,404 793,399 802,400 814,404 821,467 837,489 795,500 792,503',
  '781,404 779,477 781,490 794,507',
  '385,578 407,603 497,660 503,663',
  '514,649 528,663',
  '1259,462 1256,453 1246,525 1259,531',
];

const CONTOURS_LIGHT = [
  '370,439 402,477 440,501 464,506 509,503 543,551 565,554 577,598 592,619 595,629 620,652 640,664',
  '1137,681 1150,673 1165,663 1225,627 1248,657 1259,677',
];

const PIPES = [
  '462,261 410,331 424,370 449,400 509,471',
  '369,424 384,411',
  '509,357 515,357 516,371 512,440 510,458 510,503',
  '517,371 526,363 547,365 569,366 571,369',
  '551,290 585,275 589,307 594,322 611,352 619,363',
  '711,246 703,275 701,295 687,377',
  '773,255 768,275 757,345 781,404',
  '827,263 823,275 820,307 820,383 814,404',
  '821,467 912,408 931,307 933,274 1029,274 1259,203',
  '1029,274 1029,300 1023,320 1017,370 1013,389 953,422 912,441 837,489 853,568 858,607 862,663',
  '1050,396 1142,352 1159,274 1259,274',
  '909,498 1027,448 1082,414 1193,359 1227,332 1259,302',
  '1259,384 1245,395 1137,449 1119,460 1150,476 1208,517 1218,521',
  '1259,452 1238,449 1218,521 1217,530 1226,600',
  '1259,537 1255,539 1227,603',
  '1037,477 1103,510 1226,600',
  '969,528 1037,551 1051,562 1104,643 1105,647 1120,668 1126,681',
  '969,528 1033,640 1057,670 1062,681',
  '925,517 1006,657 1009,681',
  '925,585 951,628 959,681',
  '875,517 891,608 895,663',
  '781,489 794,508 812,593 817,663',
  '795,643 795,663',
  '510,457 521,455 572,414',
  '510,500 577,449 661,408',
  '511,515 577,465 667,421 693,418 733,419',
  '511,532 579,481 631,456 677,452 730,444 744,444',
  '510,551 585,499 678,490 778,476',
  '550,605 575,519 617,509 680,504 781,489 713,538 679,553 643,561 572,612 556,612 550,605',
  '514,654 543,624 550,619 577,616 626,580 680,569 730,546 792,503',
  '609,651 633,625 680,616 716,600',
  '552,223 552,226',
  '560,241 566,244',
];

const MAINS = [
  '510,500 510,593 495,656 479,681',
  '510,593 514,663 514,681',
  '510,593 550,605',
  '1226,600 1228,617 1212,681',
];

function Plan() {
  const group = (list: string[], stroke: string, strokeWidth = 1) => (
    <g stroke={stroke} strokeWidth={strokeWidth}>
      {list.map((points) => <polyline key={points} points={points} />)}
    </g>
  );
  return (
    <svg viewBox="180 114 1079 567" preserveAspectRatio="xMinYMin slice" className="absolute inset-0 size-full" fill="none" aria-label="Base Surface plan">
      {group(CONTOURS, '#6b7079')}
      {group(CONTOURS_LIGHT, '#8b919a')}
      {group(PIPES, '#2bbcbb')}
      {group(MAINS, '#2fd6da', 1.5)}
      <polyline points="396,221 355,296 366,400 385,578 395,681" stroke="#2fa372" strokeWidth="1.300" />
      <g stroke="#e4e8ea" strokeWidth="1.100">
        <polyline points="397,220 450,226 483,227 553,223 711,246 827,263 910,274 1055,240 1259,191" />
        <polyline points="394,217 411,227 463,261 498,284 568,327 600,390 698,410 801,482 910,499 1120,461 1259,439" />
      </g>
      <path d="M361 216.500h65M393.500 184v64M393 220.500h9M397.500 216v9" stroke="#f2f2f2" />
      {/* UCS icon */}
      <g stroke="#a3aab2" strokeWidth="1.500">
        <path d="M193 633v34h34" />
        <path d="M190.500 663.500h6v6h-6z" stroke="#dfe3e6" strokeWidth="1" />
        <path d="M194 622l4 4 4-4M198 626v5M229 657l9 9M238 657l-9 9" stroke="#dfe3e6" strokeWidth="1" />
      </g>
    </svg>
  );
}

function ViewCube() {
  return (
    <div className="absolute right-3.5 top-[26px] flex w-[86px] flex-col items-center">
      <svg viewBox="0 0 86 94" className="h-[94px] w-[86px]" aria-label="ViewCube">
        <circle cx="44" cy="46" r="36" fill="none" stroke="#464c56" strokeWidth="9" />
        <path d="M27 29h34v34H27z" fill="#b9bcc0" />
        <path d="M33 35h22v22H33z" fill="#a9b0b6" />
        <g fill="#a7abb1" fontFamily="Liberation Sans" fontWeight="bold" fontSize="13" textAnchor="middle">
          <text x="44" y="13">N</text>
          <text x="44" y="89">S</text>
          <text x="7" y="51">W</text>
          <text x="81" y="51">E</text>
        </g>
        <text x="44" y="49" fill="#2f343b" fontFamily="Liberation Sans" fontWeight="bold" fontSize="8" textAnchor="middle">TOP</text>
      </svg>
      <button className="mt-[9px] flex h-3 w-[46px] items-center justify-between rounded-sm border border-[#b3b6bd] bg-[#9297a0] px-0.5 text-[#333]">
        Unnamed<span className="text-[5px]">▽</span>
      </button>
    </div>
  );
}

function NavBar() {
  return (
    <div className="absolute right-[3px] top-[159px] h-[141px] w-[22px] rounded-sm bg-[#8a909b]/50">
      <svg viewBox="0 0 22 141" className="size-full" fill="none" stroke="#4c525c" aria-label="Navigation bar">
        <circle cx="11" cy="20" r="7" /><circle cx="11" cy="20" r="3.500" />
        <path d="M6 52c-3-3-1-5 1-2l0-8 2 6V41l2 7 2-6v7l3-2c1 4-2 9-5 9s-4-1-5-4z" />
        <path d="M4 61l11 13M16 60L5 71M3 62v-3h3M3 70v3h3" strokeWidth="1.400" /><circle cx="15" cy="70" r="3" />
        <path d="M11 86v15M3 93h16M8 88c-3 4-3 7 0 11M14 88c3 4 3 7 0 11" />
        <path d="M5 113h12v14H5zM5 120h12M11 113v14" />
        <path d="M10 33h2M10 80h2M10 106h2M18 3l1 1M18 137l1-1" />
      </svg>
    </div>
  );
}

const OPTIONS = ['Arc', 'Close', 'Halfwidth', 'Length', 'Undo', 'Width'];

function CommandLine() {
  return (
    <div className="absolute bottom-px left-[322px] w-[434px] font-['Liberation_Mono',monospace] leading-[10px]">
      <div className="ml-10 flex flex-col items-start gap-[3px] whitespace-pre text-[#c2c4c6]">
        <p className="bg-[#6a6d70]/75 px-0.5">
          {'Specify next point or [Arc/Close/Halfwidth/Length/Undo/Width]:  <Osnap off>\n<Object Snap Tracking off>'}
        </p>
        <p className="bg-[#6a6d70]/90 px-0.5 text-white">Specify next point or [Arc/Close/Halfwidth/Length/Undo/Width]:</p>
      </div>
      <div className="mt-0.5 flex h-[17px] items-center bg-white">
        <div className="flex h-full w-9 shrink-0 items-center gap-1.5 bg-linear-to-b from-[#777] to-[#4a4a4a] pl-1">
          <span className="h-3 w-[3px] border-x border-[#aaa]" />
          <button aria-label="Close command line"><svg viewBox="0 0 8 8" className="size-[7px]" stroke="#fff" strokeWidth="1.500"><path d="M1 1l6 6M7 1L1 7" /></svg></button>
          <button aria-label="Customize">
            <svg viewBox="0 0 12 12" className="size-[10px]" fill="none" stroke="#eee" strokeWidth="2"><path d="M5 5l6 6M1 3l2 2 2-1 1-2-1.500-1.500" /></svg>
          </button>
        </div>
        <button aria-label="Recent commands" className="flex shrink-0 items-center gap-1 px-[3px]">
          <svg viewBox="0 0 8 8" className="size-2" fill="#445"><path d="M0 6h2v2H0zM3 6h1v1H3zM5 6h2v2H5zM5 0h2v2H5zM5 3h2v1H5z" /></svg>
          <Caret className="fill-[#444]!" />
        </button>
        <label htmlFor="command" className="flex min-w-0 flex-1 items-center whitespace-pre pl-0.5 text-[#1b1b1b]">
          PLINE Specify next point or [
          {OPTIONS.map((o, i) => (
            <span key={o} className={clsx('rounded-[1px] bg-[#dcdcdc]', i < 5 && 'mr-[3px]')}>
              <span className="text-[#2a1fc4]">{o[0]}</span>{o.slice(1)}
            </span>
          ))}
          ]:
          <input id="command" className="w-0 min-w-0 flex-1 outline-none" />
        </label>
        <Caret className="mr-1 rotate-180 fill-[#222]!" />
      </div>
    </div>
  );
}

function Viewport() {
  return (
    <main className="relative mt-0.5 min-w-0 flex-1 overflow-hidden bg-[#212831]">
      <Plan />
      <p className="absolute left-0.5 top-[5px] text-[#e8eaec]">[−][Top][2D Wireframe]</p>
      <div className="absolute right-2 top-2 flex items-center gap-[6px]">
        <button aria-label="Minimize drawing"><svg viewBox="0 0 7 7" className="size-[7px]" stroke="#fff" strokeWidth="1.500"><path d="M0 5.500h7" /></svg></button>
        <button aria-label="Restore drawing"><svg viewBox="0 0 7 7" className="size-[7px]" stroke="#fff" fill="none"><path d="M.500 2.500h4v4h-4zM2.500 2V.500h4v4H5" /></svg></button>
        <button aria-label="Close drawing"><svg viewBox="0 0 7 7" className="size-[7px]" stroke="#fff" strokeWidth="1.700"><path d="M1 1l5 5M6 1L1 6" /></svg></button>
      </div>
      {/* dynamic input */}
      <div className="absolute left-[225px] top-[114px] flex h-[14px] items-stretch gap-0.5 text-[#151515]">
        <label htmlFor="dyn-distance" className="flex w-[97px] items-center justify-between whitespace-nowrap border border-[#777] bg-[#98979b] px-0.5">
          Specify next point or
          <span className="flex size-[7px] items-center justify-center border border-[#444fa8] bg-[#eef] text-[5px] leading-none">▼</span>
        </label>
        <input id="dyn-distance" defaultValue="47.7242" className="w-[35px] border-2 border-white bg-[#1f78d0] text-white outline-none" />
        <output className="flex w-[31px] items-center justify-center border border-[#777] bg-[#98979b]">&lt; 147°</output>
      </div>
      <ViewCube />
      <NavBar />
      <CommandLine />
    </main>
  );
}

const SNAP_GROUPS = [
  { size: 'h-[192px]', icons: ['rA', 'rB', 'rC', 'rD', 'rE', 'rF', 'rG', 'rH', 'rH', 'rH', 'rH', 'rI', 'rJ'] },
  { size: 'h-[18px]', icons: ['rH'] },
  { size: 'h-[48px]', icons: ['rK', 'rL', 'rL'] },
  { size: 'h-[105px]', icons: ['rM', 'rN', 'rM', 'rN', 'rO', 'rP', 'rQ'] },
];

function SnapToolbar() {
  return (
    <aside className="flex w-[21px] shrink-0 flex-col items-center gap-px bg-[#5a5a5a] pt-1">
      <div className="flex w-4 flex-col border border-[#3a3a3a] bg-[#636363]">
        <span className="mx-auto my-px h-0.5 w-[10px] border-y border-dotted border-[#333]" />
        {SNAP_GROUPS.map(({ size, icons }, g) => (
          <div key={g} className={clsx('flex flex-col', size, g > 0 && 'border-t border-[#d4d4d4]')}>
            {icons.map((n, i) => (
              <button key={i} aria-label={'Snap ' + (i + 1)} className="flex min-h-0 flex-1 items-center justify-center"><Ico n={n} className="size-[11px]" /></button>
            ))}
          </div>
        ))}
      </div>
      <div className="flex h-[48px] w-4 flex-col border border-[#3a3a3a] bg-[#636363]">
        <span className="mx-auto my-px h-0.5 w-[10px] border-y border-dotted border-[#333]" />
        {['rH', 'rE', 'rH'].map((n, i) => (
          <button key={i} aria-label={'Point tool ' + (i + 1)} className="flex min-h-0 flex-1 items-center justify-center"><Ico n={n} className="size-[11px]" /></button>
        ))}
      </div>
    </aside>
  );
}

// ── status bar ───────────────────────────────────────────────────────────────
const man = <path d="M7 1l1 4 4 4-3 0-2-2-2 4H3l2-5-2-1M7 1L5 3" />;

function StatusCell({ className, children }: { className?: string; children: ReactNode }) {
  return (
    <div className={clsx('flex h-[18px] items-center justify-around border border-[#6e6e6e] bg-[#4c4c4c] px-0.5', className)}>{children}</div>
  );
}

function S({ label, stroke = '#d2d2d2', children }: { label: string; stroke?: string; children: ReactNode }) {
  return (
    <button aria-label={label}>
      <svg viewBox="0 0 13 12" className="h-[11px] w-3" fill="none" stroke={stroke}>{children}</svg>
    </button>
  );
}

function StatusBar() {
  return (
    <footer className="flex h-[19px] shrink-0 items-start justify-between bg-[#393939]">
      <div className="flex gap-1 pl-[9px] text-[#a9a9a9]">
        <button className="h-3 w-9 rounded-b-md bg-linear-to-b from-[#8b8b8b] to-[#6e6e6e] font-bold text-white">Model</button>
        <button className="h-3 w-10 rounded-b-md bg-[#545454]">Layout1</button>
        <button className="h-3 w-[41px] rounded-b-md bg-[#545454]">Layout2</button>
        <button aria-label="New layout" className="h-3 w-[14px] rounded-b-md bg-[#545454] text-[10px] leading-none text-white">+</button>
      </div>
      <div className="flex items-center gap-px text-[9px] text-[#f0f0f0]">
        <StatusCell className="w-[33px]"><button>MODEL</button></StatusCell>
        <StatusCell className="w-[44px]">
          <S label="Grid"><path d="M3 1v10M6 1v10M9 1v10M12 1v10M1 2h12M1 5h12M1 8h12" strokeWidth=".8" /></S>
          <S label="Snap" stroke="#8d8d8d"><path d="M1 2h11M1 5h11M1 8h11M1 11h11" /></S>
          <Caret />
        </StatusCell>
        <StatusCell className="w-[70px]">
          <S label="Ortho"><path d="M2 2v8h10M2 7h3v3" /></S>
          <S label="Polar"><circle cx="6" cy="7" r="4.500" /><path d="M6 7h6M6 7l5-5" /></S>
          <Caret />
          <S label="Isodraft"><path d="M6 0v12M2 2l9 9" /></S>
          <Caret />
        </StatusCell>
        <StatusCell className="w-[41px]">
          <S label="Object snap tracking"><path d="M1 10h11M1 10l9-8" /></S>
          <S label="Object snap"><path d="M3 2.500h8v8H3z" /><path d="M1 1h3v3H1z" fill="#35c04a" stroke="none" /></S>
          <Caret />
        </StatusCell>
        <StatusCell className="w-[90px]">
          <S label="Annotation visibility" stroke="#2f8fe8"><g strokeWidth="2">{man}</g></S>
          <S label="Autoscale"><g strokeWidth="1.500">{man}</g></S>
          <S label="Annotation scale"><path d="M6 1v5l-4 5M6 6l5 5" strokeWidth="2" /></S>
          <button className="flex items-center gap-[3px] whitespace-nowrap">1" = 40'<Caret /></button>
        </StatusCell>
        <StatusCell className="w-[30px]">
          <Ico n="gear" className="size-[10px]" />
          <Caret />
        </StatusCell>
        <StatusCell className="w-[15px]"><S label="Add"><path d="M6 1v10M1 6h10" strokeWidth="1.300" /></S></StatusCell>
        <StatusCell className="w-[49px]">
          <S label="Elevation" stroke="#9aa58a"><path d="M1 5l5-2 5 2-5 2zM1 8l5 2 5-2" fill="#6f9a4b" /></S>
          <button>3.5000</button>
        </StatusCell>
        <StatusCell className="w-[17px]"><S label="Isolate"><circle cx="8" cy="7" r="3" /><path d="M1 1h4v4H1zM4 7h3v4H4z" /></S></StatusCell>
        <StatusCell className="w-[17px] bg-[#365a78]!"><S label="Hardware acceleration" stroke="#0c3c78"><circle cx="6" cy="6" r="5.500" fill="#1f7ad6" /><path d="M4 8l5-5" /></S></StatusCell>
        <StatusCell className="w-[17px]"><S label="Notification" stroke="none"><path d="M1 1h7v8H1z" fill="#e9eef4" /><path d="M5 5h7v6H5z" fill="#4f94dc" /><circle cx="10" cy="10" r="2" fill="#e6c33b" /></S></StatusCell>
        <StatusCell className="w-[33px]">
          <S label="Clean screen"><path d="M1 2h11v8H1zM3 8l2-2M10 4L8 6" /></S>
          <S label="Customization"><path d="M1 2h11M1 6h11M1 10h11" strokeWidth="1.500" /></S>
        </StatusCell>
      </div>
    </footer>
  );
}

// ── taskbar ──────────────────────────────────────────────────────────────────
const APPS: { name: string; on?: string; art: ReactNode }[] = [
  { name: 'Start', art: <path d="M0 2l5-1v5H0zM6 1l6-1v6H6zM0 7h5v5l-5-1zM6 7h6v6l-6-1z" fill="#fff" /> },
  { name: 'Cortana', art: <circle cx="6" cy="6" r="4.500" stroke="#fff" strokeWidth="1.300" /> },
  { name: 'Task view', art: <path d="M1 1v2h7V1M1 11V9h7v2M1 4.500h7v3H1zM10.500 0v12M9.500 4h2" stroke="#fff" /> },
  { name: 'File Explorer', art: <><path d="M0 1h5l1 2h6v8H0z" fill="#f3cf6b" /><path d="M2 11V7h8v4H8V9H4v2z" fill="#5fb6e6" /></> },
  { name: 'Chrome', art: <><circle cx="6" cy="6" r="5" fill="#e34133" /><path d="M1.700 3.500L6 11a5 5 0 01-4.300-7.500z" fill="#2fa352" /><path d="M6 11a5 5 0 004.700-7H6l2 3z" fill="#f8c62c" /><circle cx="6" cy="6" r="2.200" fill="#4284f3" stroke="#fff" strokeWidth=".7" /></> },
  { name: 'Spotify', art: <><circle cx="6" cy="6" r="5.500" fill="#2bc45c" /><path d="M3 4.500c2-.700 4-.500 6 .500M3 6.500c2-.500 3.500-.300 5.500.500M3.500 8.300c1.500-.300 3-.200 4.300.500" stroke="#0b2313" /></> },
  { name: 'Steam', art: <><circle cx="8" cy="4" r="2.700" fill="#fff" /><circle cx="8" cy="4" r="1.200" fill="#16253d" /><path d="M0 6l5 2 2-2-2 4a2 2 0 01-4-1z" fill="#4fa2e0" stroke="#dfe9f3" strokeWidth=".6" /></> },
  { name: 'OBS Studio', on: 'border-b-2 border-[#b9b3c6]', art: <><circle cx="6" cy="6" r="5.300" fill="#26242b" stroke="#cfcfcf" strokeWidth=".7" /><path d="M6 2c2 1 2 3 0 4M3 8c0-2 2-3 3-2M9 8c-1 1-3 1-3-2" stroke="#cfcfcf" /></> },
  { name: 'Books', art: <path d="M1 1h10v10H1zM3 1v10" fill="#1b657b" stroke="#12495c" /> },
  { name: 'AutoCAD Civil 3D', on: 'bg-[#4a4356] border-b-2 border-[#b9b3c6]', art: <><path d="M0 0h12v12H0z" fill="#e9f1f7" /><path d="M2 10L5 2h2l3 8H8L7 8H5l-1 2z" fill="#1d5b8c" /></> },
  { name: 'Autodesk', art: <><path d="M1 1h10v10H1z" fill="#f4f8fa" /><path d="M3 8.500l3-5 3 5z" stroke="#2290b8" strokeWidth="1.200" /></> },
  { name: 'Zoom', art: <><circle cx="6" cy="6" r="5.500" fill="#3f8df5" stroke="#cfe1fb" strokeWidth=".7" /><path d="M3 4h4v4H3zM7.500 5.500l2-1v3l-2-1z" fill="#fff" /></> },
  { name: 'Webroot', art: <><circle cx="6" cy="6" r="4.800" fill="#2fae2c" /><ellipse cx="6" cy="4" rx="3" ry="2" fill="#c6f2b9" /></> },
];

function Taskbar() {
  return (
    <div className="flex h-5 shrink-0 items-stretch justify-between bg-linear-to-r from-[#0a0812] via-[#170c2e] to-[#0e0820] text-white">
      <div className="flex w-[320px]">
        {APPS.map(({ name, on, art }) => (
          <button key={name} aria-label={name} className={clsx('flex flex-1 items-center justify-center', on)}>
            <svg viewBox="0 0 12 13" className="h-3 w-[11px]" fill="none">{art}</svg>
          </button>
        ))}
      </div>
      <div className="flex items-center gap-[5px] pr-0.5">
        <svg viewBox="0 0 12 12" className="mr-1 size-[11px]" fill="none" stroke="#eee"><circle cx="8" cy="3" r="2" /><circle cx="4" cy="6" r="1.700" /><path d="M1 11c0-4 6-4 6 0M7 6c3-1 4 1 4 4" /></svg>
        <svg viewBox="0 0 8 5" className="mr-1 h-[5px] w-2" fill="none" stroke="#eee"><path d="M0 5l4-4 4 4" /></svg>
        <svg viewBox="0 0 12 10" className="h-[9px] w-[11px]" fill="none" stroke="#eee"><path d="M3 3h8v5H4M1 1v3h3M2 4v4" /></svg>
        <svg viewBox="0 0 12 10" className="h-[10px] w-3" fill="none" stroke="#eee"><path d="M3 1h8v6H3zM5 9h5M1 1v7h2" /></svg>
        <svg viewBox="0 0 12 10" className="h-[9px] w-[11px]" fill="none" stroke="#eee"><path d="M0 3h2l3-2v8L2 7H0zM7 3c1 1 1 3 0 4M9 1c2 2 2 6 0 8" /></svg>
        <time className="ml-1 whitespace-nowrap">10:38 AM</time>
        <button aria-label="Notifications" className="ml-2 mr-3">
          <svg viewBox="0 0 12 12" className="size-[11px]" fill="#f2f2f2"><path d="M0 0h12v9H8l-2 3-2-3H0z" /><path d="M2 3h8M2 5h8" stroke="#888" strokeWidth=".8" /></svg>
        </button>
        <span className="h-full w-px bg-[#55506a]" />
      </div>
    </div>
  );
}

export default function App() {
  return (
    <div className="flex h-screen w-full flex-col overflow-hidden bg-[#5a5a5a] font-[Lato,'Open_Sans',sans-serif] text-[8px] leading-3 [text-rendering:geometricPrecision]">
      <TopBars />
      <Ribbon />
      <FileTabs />
      <div className="flex min-h-0 flex-1">
        <div className="flex w-[180px] shrink-0 flex-col bg-[#5a5a5a] pr-[3px]">
          <TaskPane />
          <Toolspace />
        </div>
        <Viewport />
        <SnapToolbar />
      </div>
      <StatusBar />
      <Taskbar />
    </div>
  );
}
